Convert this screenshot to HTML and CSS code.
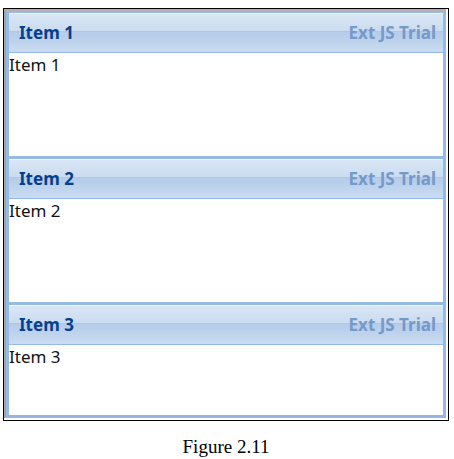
FILE: index.html
```
<!DOCTYPE html>
<html lang="en">
<head>
<meta charset="utf-8">
<title>Figure 2.11</title>
<link rel="stylesheet" href="styles.css">
</head>
<body>
<figure class="figure">
  <div class="frame">
    <div class="viewport">
      <section class="panel">
        <header class="panel-header"><h2 class="title">Item 1</h2><span class="trial">Ext JS Trial</span></header>
        <p class="panel-body">Item 1</p>
      </section>
      <section class="panel">
        <header class="panel-header"><h2 class="title">Item 2</h2><span class="trial">Ext JS Trial</span></header>
        <p class="panel-body">Item 2</p>
      </section>
      <section class="panel panel-last">
        <header class="panel-header"><h2 class="title">Item 3</h2><span class="trial">Ext JS Trial</span></header>
        <p class="panel-body">Item 3</p>
      </section>
    </div>
  </div>
  <figcaption class="caption">Figure 2.11</figcaption>
</figure>
</body>
</html>
```
FILE: styles.css
```
* {
  box-sizing: border-box;
}

body {
  margin: 0;
  background: #fff;
  color: #111;
  font-family: "Noto Sans", sans-serif;
  font-size: 17px;
}

.figure {
  margin: 8px 5px 0 3px;
}

.frame {
  border: 1px solid #000;
  padding: 0 2px 2px 0;
}

.viewport {
  border-top: 2px solid #b4aeb0;
  border-left: 2px solid #a4a4a4;
}

.panel {
  border: 3px solid #96bae6;
  border-bottom: 0;
}

.panel:first-child {
  border-top-width: 2px;
}

.panel-last {
  border-bottom: 3px solid #96b4e2;
}

.panel-header {
  display: flex;
  justify-content: space-between;
  align-items: center;
  height: 40px;
  padding: 0 7px 0 10px;
  border-top: 1px solid #f0f5fb;
  border-bottom: 1px solid #94b9ea;
  background: linear-gradient(#d9e6f4 0, #cbdcf0 17px, #a9c2e2 17px, #b5cceb 18px, #b9cfeb 23px, #cadcf2 100%);
  line-height: 24px;
}

.title {
  margin: 0;
  color: #04408c;
  font-size: 17px;
  font-weight: bold;
}

.trial {
  color: #7599c8;
  font-weight: bold;
}

.panel-body {
  min-height: 103px;
  margin: 0;
  line-height: 24px;
}

.panel-last .panel-body {
  min-height: 70px;
}

.caption {
  padding: 14px 0;
  color: #000;
  font-family: "Palatino Linotype", Palatino, "Liberation Serif", serif;
  font-size: 19px;
  line-height: 24px;
  text-align: center;
}
```
